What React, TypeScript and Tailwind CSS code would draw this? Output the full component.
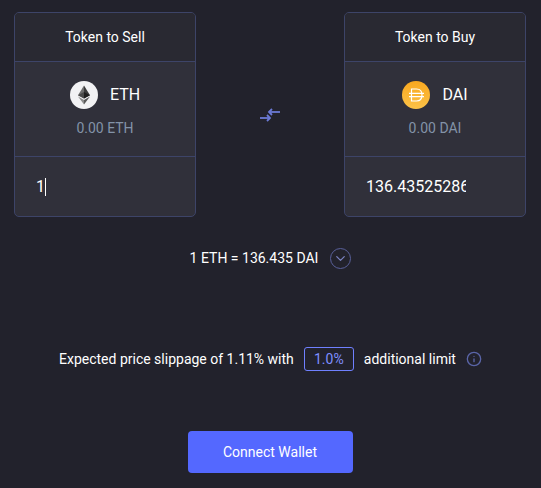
import { ChevronDown, Info } from 'lucide-react';

function EthIcon() {
  return (
    <svg width="28" height="28" viewBox="0 0 28 28">
      <circle cx="14" cy="14" r="14" fill="#f2f2f4" />
      <path d="M14 4.5 L8 14.2 L14 17.6 Z" fill="#6e6e6e" />
      <path d="M14 4.5 L20 14.2 L14 17.6 Z" fill="#3c3c3c" />
      <path d="M14 11 L8 14.2 L14 17.6 Z" fill="#4a4a4a" />
      <path d="M14 11 L20 14.2 L14 17.6 Z" fill="#1f1f1f" />
      <path d="M8 15.4 L14 23.5 L14 19 Z" fill="#8c8c8c" />
      <path d="M20 15.4 L14 23.5 L14 19 Z" fill="#5a5a5a" />
    </svg>
  );
}

function DaiIcon() {
  return (
    <svg width="28" height="28" viewBox="0 0 28 28">
      <defs>
        <linearGradient id="dai" x1="0" y1="0" x2="0" y2="1">
          <stop offset="0" stopColor="#f9a81f" />
          <stop offset="1" stopColor="#fbc248" />
        </linearGradient>
      </defs>
      <circle cx="14" cy="14" r="14" fill="url(#dai)" />
      <path d="M9.5 8 H14.5 C18 8 20 10.6 20 14 C20 17.4 18 20 14.5 20 H9.5 Z" fill="none" stroke="#fff" strokeWidth="1.2" />
      <path d="M7 12.3 H22 M7 15.7 H22" fill="none" stroke="#fff" strokeWidth="1.2" />
    </svg>
  );
}

function SwapIcon() {
  return (
    <svg width="22" height="16" viewBox="0 0 22 16" fill="none" stroke="#6b7ad6" strokeWidth="1.8">
      <path d="M10 5 H21" />
      <path d="M13 2 L10 5 L13 8" />
      <path d="M1 11 H11" />
      <path d="M8 8 L11 11 L8 14" />
    </svg>
  );
}

function TokenCard({ title, icon, symbol, balance, value, caret }: {
  title: string;
  icon: React.ReactNode;
  symbol: string;
  balance: string;
  value: string;
  caret?: boolean;
}) {
  return (
    <div className="w-[182px] h-[205px] rounded-[5px] border border-[#3d4468] bg-[#30303a] overflow-hidden flex flex-col">
      <div className="h-[49px] shrink-0 bg-[#292932] border-b border-[#3d4468] flex items-center justify-center text-[14px] text-white">
        {title}
      </div>
      <div className="h-[95px] shrink-0 border-b border-[#3d4468] flex flex-col items-center pt-[19px]">
        <div className="flex items-center gap-[12px]">
          {icon}
          <span className="text-[16px] leading-[28px] text-white">{symbol}</span>
        </div>
        <div className="mt-[10px] text-[14px] leading-[18px] text-[#8393a8]">{balance}</div>
      </div>
      <div className="flex-1 flex items-center pl-[21px]">
        <input
          readOnly
          value={value}
          className={caret ? 'w-[9px] bg-transparent outline-none text-[16px] text-white' : 'w-[100px] bg-transparent outline-none text-[16px] text-white'}
        />
        {caret && <span className="w-px h-[18px] bg-white" />}
      </div>
    </div>
  );
}

export default function App() {
  return (
    <div className="w-[541px] h-[488px] overflow-hidden bg-[#22222c] font-['Roboto',sans-serif] flex flex-col">
      <div className="flex items-center justify-between pl-[14px] pr-[15px] pt-[12px]">
        <TokenCard title="Token to Sell" icon={<EthIcon />} symbol="ETH" balance="0.00 ETH" value="1" caret />
        <SwapIcon />
        <TokenCard title="Token to Buy" icon={<DaiIcon />} symbol="DAI" balance="0.00 DAI" value="136.43525286" />
      </div>

      <div className="mt-[31px] flex items-center justify-center gap-[12px] text-[14px] text-white">
        <span>1 ETH = 136.435 DAI</span>
        <span className="w-[21px] h-[21px] rounded-full border border-[#59609a] flex items-center justify-center">
          <ChevronDown size={15} color="#7a82c0" />
        </span>
      </div>

      <div className="mt-[78px] flex items-center pl-[59px] text-[14px] text-white">
        <span>Expected price slippage of 1.11% with</span>
        <span className="ml-[10px] w-[50px] h-[24px] rounded-[3px] border border-[#6f80ff] flex items-center justify-center text-[#7f8eff]">
          1.0%
        </span>
        <span className="ml-[10px]">additional limit</span>
        <Info size={16} color="#5a65a8" className="ml-[10px]" />
      </div>

      <div className="mt-[60px] flex justify-center pr-[1px]">
        <button className="w-[165px] h-[42px] rounded-[4px] bg-[#5468ff] text-[14px] text-white">
          Connect Wallet
        </button>
      </div>
    </div>
  );
}
